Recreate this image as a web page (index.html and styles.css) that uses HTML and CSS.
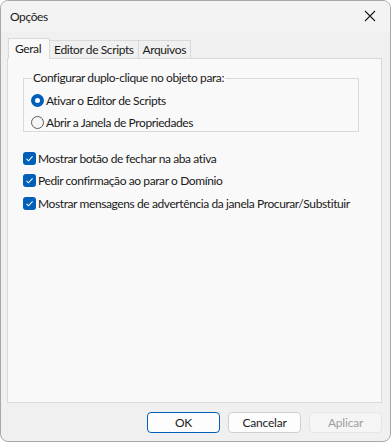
FILE: index.html
```html
<!DOCTYPE html>
<html lang="pt">
  <head>
    <meta charset="UTF-8" />
    <title>Opções</title>
    <link rel="stylesheet" href="styles.css">
  </head>
  <body>
    <div class="window">
      <div class="titlebar">
        <span class="title">Opções</span>
        <span class="close">
          <svg width="12" height="12" viewBox="0 0 12 12"><path d="M1 1 L11 11 M11 1 L1 11" stroke="#1a1a1a" stroke-width="1.1" fill="none"/></svg>
        </span>
      </div>

      <div class="content">
        <div class="tabs">
          <div class="tab active">Geral</div>
          <div class="tab">Editor de Scripts</div>
          <div class="tab">Arquivos</div>
        </div>

        <div class="panel">
          <fieldset class="group">
            <legend>Configurar duplo-clique no objeto para:</legend>
            <label class="option"><span class="radio checked"></span>Ativar o Editor de Scripts</label>
            <label class="option"><span class="radio"></span>Abrir a Janela de Propriedades</label>
          </fieldset>

          <div class="checks">
            <label class="option"><span class="check"><svg width="13" height="13" viewBox="0 0 13 13"><path d="M3.5 6.8 L5.5 8.8 L9.6 4.4" stroke="#fff" stroke-width="1.1" fill="none"/></svg></span>Mostrar botão de fechar na aba ativa</label>
            <label class="option"><span class="check"><svg width="13" height="13" viewBox="0 0 13 13"><path d="M3.5 6.8 L5.5 8.8 L9.6 4.4" stroke="#fff" stroke-width="1.1" fill="none"/></svg></span>Pedir confirmação ao parar o Domínio</label>
            <label class="option"><span class="check"><svg width="13" height="13" viewBox="0 0 13 13"><path d="M3.5 6.8 L5.5 8.8 L9.6 4.4" stroke="#fff" stroke-width="1.1" fill="none"/></svg></span>Mostrar mensagens de advertência da janela Procurar/Substituir</label>
          </div>
        </div>

        <div class="buttons">
          <button class="default">OK</button>
          <button>Cancelar</button>
          <button disabled>Aplicar</button>
        </div>
      </div>
    </div>
  </body>
</html>
```

FILE: styles.css
```css
html, body {
  margin: 0;
  padding: 0;
  background: #ffffff;
}
body {
  font-family: Lato, "Noto Sans", sans-serif;
  font-size: 12px;
  letter-spacing: -0.4px;
  color: #1a1a1a;
}
.window {
  width: 391px;
  height: 442px;
  box-sizing: border-box;
  border: 1px solid #a8a8a8;
  border-radius: 8px;
  background: #f0f0f0;
  overflow: hidden;
  display: flex;
  flex-direction: column;
}
.titlebar {
  height: 31px;
  display: flex;
  align-items: center;
  justify-content: space-between;
  padding: 0 8px 0 9px;
  background: #f3f3f3;
}
.title {
  font-size: 12px;
  color: #1a1a1a;
}
.close {
  display: flex;
  width: 24px;
  justify-content: center;
  margin-top: -2px;
}
.content {
  flex: 1;
  display: flex;
  flex-direction: column;
  padding: 6px 8px 0 6px;
}
.tabs {
  display: flex;
  align-items: flex-end;
  height: 20px;
  position: relative;
  z-index: 1;
  white-space: nowrap;
}
.tab {
  height: 18px;
  line-height: 18px;
  padding: 0 4px;
  border: 1px solid #d9d9d9;
  border-bottom: none;
  border-left: none;
  background: #f0f0f0;
  box-sizing: border-box;
}
.tab.active {
  height: 21px;
  line-height: 20px;
  margin-bottom: -1px;
  margin-left: 1px;
  border-left: 1px solid #d9d9d9;
  background: #f9f9f9;
  padding: 0 8px 0 6px;
}
.panel {
  height: 345px;
  box-sizing: border-box;
  border: 1px solid #d9d9d9;
  background: #f9f9f9;
  padding: 12px 22px 0 15px;
}
.group {
  margin: 0;
  border: 1px solid #d9d9d9;
  padding: 4px 8px 5px 7px;
  height: 61px;
  box-sizing: border-box;
}
.group legend {
  padding: 0 1px;
  margin-left: 1px;
  line-height: 14px;
}
.option {
  display: flex;
  align-items: center;
  height: 22px;
  gap: 2px;
  white-space: nowrap;
}
.radio {
  width: 13px;
  height: 13px;
  box-sizing: border-box;
  border-radius: 50%;
  border: 1px solid #5c5c5c;
  background: #f5f5f5;
}
.radio.checked {
  border: 4px solid #005fb8;
  background: #ffffff;
}
.checks {
  margin-top: 15px;
}
.checks .option {
  height: 22.5px;
}
.check {
  width: 13px;
  height: 13px;
  border-radius: 3px;
  background: #005fb8;
  display: flex;
}
.buttons {
  display: flex;
  justify-content: flex-end;
  gap: 8px;
  margin-top: 9px;
  padding-right: 0;
}
button {
  width: 73px;
  height: 21px;
  font-family: Lato, "Noto Sans", sans-serif;
  font-size: 12px;
  letter-spacing: -0.2px;
  color: #1a1a1a;
  background: #fdfdfd;
  border: 1px solid #d0d0d0;
  border-radius: 4px;
  padding: 0;
}
button.default {
  border-color: #005fb8;
}
button:disabled {
  color: #a0a0a0;
  background: #f5f5f5;
  border-color: #e5e5e5;
}
```
